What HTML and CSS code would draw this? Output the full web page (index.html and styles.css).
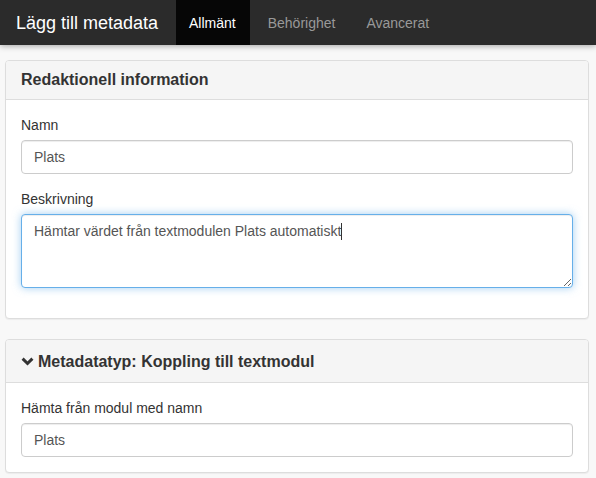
FILE: index.html
```html
<!DOCTYPE html>
<html lang="sv">
<head>
<meta charset="utf-8">
<title>Lägg till metadata</title>
<link rel="stylesheet" href="styles.css">
</head>
<body>
<nav class="navbar">
  <span class="brand">Lägg till metadata</span>
  <ul class="tabs">
    <li class="tab active">Allmänt</li>
    <li class="tab">Behörighet</li>
    <li class="tab">Avancerat</li>
  </ul>
</nav>
<main class="content">
  <section class="panel">
    <div class="panel-heading">
      <h3 class="panel-title">Redaktionell information</h3>
    </div>
    <div class="panel-body">
      <div class="form-group">
        <label class="label">Namn</label>
        <div class="input">Plats</div>
      </div>
      <div class="form-group">
        <label class="label">Beskrivning</label>
        <div class="textarea focused">Hämtar värdet från textmodulen Plats automatiskt<span class="caret"></span></div>
      </div>
    </div>
  </section>
  <section class="panel">
    <div class="panel-heading tall">
      <h3 class="panel-title">
        <svg class="chevron" width="13" height="9" viewBox="0 0 13 9" aria-hidden="true"><polyline points="1.6,1.6 6.5,6.5 11.4,1.6" fill="none" stroke="#333" stroke-width="3" stroke-linecap="butt"/></svg>
        Metadatatyp: Koppling till textmodul
      </h3>
    </div>
    <div class="panel-body">
      <div class="form-group last">
        <label class="label">Hämta från modul med namn</label>
        <div class="input">Plats</div>
      </div>
    </div>
  </section>
</main>
</body>
</html>
```
FILE: styles.css
```css
html, body {
  margin: 0;
  padding: 0;
}
body {
  background: #f8f8f8;
  font-family: "Liberation Sans", Arial, sans-serif;
  font-size: 14px;
  line-height: 20px;
  color: #333;
}
.navbar {
  display: flex;
  align-items: stretch;
  height: 45px;
  background: #2b2b2b;
  box-shadow: 0 1px 6px rgba(0, 0, 0, 0.35);
  position: relative;
  z-index: 1;
}
.brand {
  display: flex;
  align-items: center;
  padding: 0 15px 0 16px;
  font-size: 18px;
  color: #fff;
  width: 145px;
  flex: none;
}
.tabs {
  display: flex;
  margin: 0;
  padding: 0;
  list-style: none;
}
.tab {
  display: flex;
  align-items: center;
  padding: 0 15px;
  color: #999;
  font-size: 14px;
}
.tab.active {
  background: #060606;
  color: #fff;
  padding: 0 14px 0 13px;
}
.tab.active + .tab {
  padding-left: 18px;
  padding-right: 16px;
}
.content {
  padding: 15px 7px 1px 5px;
}
.panel {
  background: #fff;
  border: 1px solid #ddd;
  border-radius: 4px;
  box-shadow: 0 1px 1px rgba(0, 0, 0, 0.05);
  margin-bottom: 20px;
  overflow: hidden;
}
.panel-heading {
  background: #f5f5f5;
  border-bottom: 1px solid #ddd;
  padding: 10px 15px;
}
.panel-title {
  margin: 0;
  font-size: 16px;
  font-weight: bold;
  line-height: 17.6px;
  color: #333;
}
.panel-heading.tall {
  padding: 11px 15px 10px;
}
.panel-heading.tall .panel-title {
  line-height: 21px;
  display: flex;
  align-items: center;
}
.chevron {
  margin: 0 4px 0 0;
  flex: none;
}
.panel-body {
  padding: 15px;
}
.form-group {
  margin-bottom: 15px;
}
.form-group.last {
  margin-bottom: 0;
}
.label {
  display: block;
  margin-bottom: 5px;
  font-weight: normal;
  color: #333;
}
.input,
.textarea {
  box-sizing: border-box;
  width: 100%;
  background: #fff;
  border: 1px solid #ccc;
  border-radius: 4px;
  box-shadow: inset 0 1px 1px rgba(0, 0, 0, 0.075);
  padding: 6px 12px;
  color: #555;
  font-size: 14px;
  line-height: 20px;
}
.input {
  height: 34px;
}
.textarea {
  height: 74px;
  overflow: auto;
  resize: both;
}
.textarea.focused {
  border-color: #66afe9;
  box-shadow: inset 0 1px 1px rgba(0, 0, 0, 0.075), 0 0 8px rgba(102, 175, 233, 0.6);
}
.caret {
  display: inline-block;
  width: 1px;
  height: 17px;
  background: #333;
  vertical-align: -4px;
}
```
